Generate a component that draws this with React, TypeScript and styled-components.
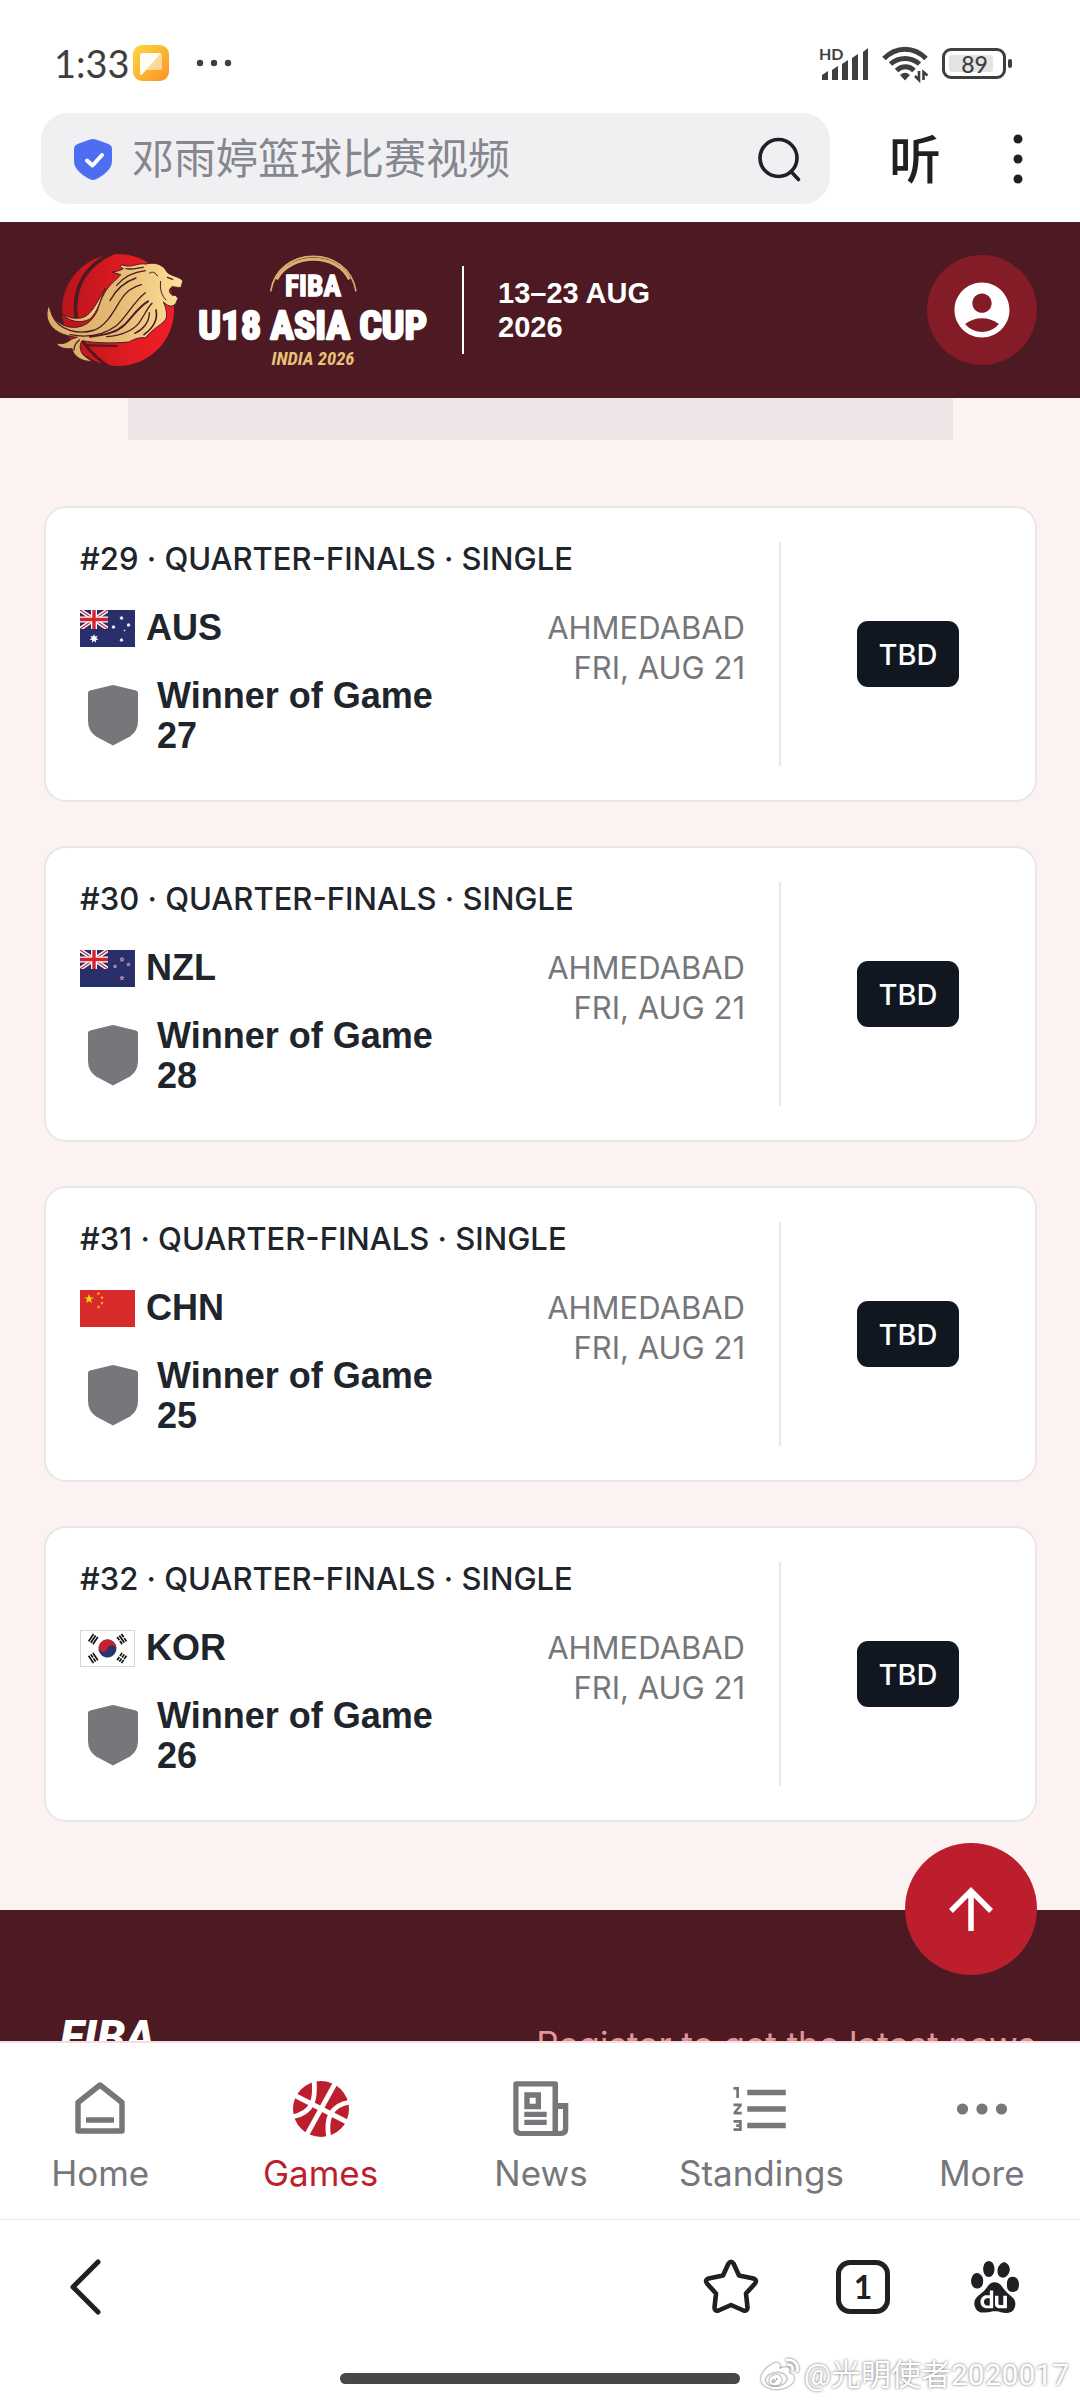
import React from 'react';
import styled, { createGlobalStyle, ThemeProvider } from 'styled-components';
import { MdAccountCircle, MdArrowUpward, MdFormatListNumbered } from 'react-icons/md';
import { SiBaidu } from 'react-icons/si';
import { FaWeibo } from 'react-icons/fa';

const theme = {
  colors: {
    $white: '#ffffff',
    $maroon: '#4d1923',
    $maroonLight: '#841c27',
    $red: '#bc1e2d',
    $pink: '#fbf2f1',
    $placeholder: '#ede4e5',
    $line: '#e8e8e8',
    $ink: '#20242b',
    $dark: '#101720',
    $gray: '#75777a',
    $system: '#3f3f3f',
    $browser: '#1f2024',
  },
};

type Team = 'AUS' | 'NZL' | 'CHN' | 'KOR';

interface IGame {
  id: number;
  team: Team;
  winnerOf: number;
}

interface INavProps {
  active?: boolean;
}

const GAMES: IGame[] = [
  { id: 29, team: 'AUS', winnerOf: 27 },
  { id: 30, team: 'NZL', winnerOf: 28 },
  { id: 31, team: 'CHN', winnerOf: 25 },
  { id: 32, team: 'KOR', winnerOf: 26 },
];

const GlobalStyle = createGlobalStyle`
  * {
    box-sizing: border-box;
  }

  body {
    margin: 0;
    font-family: 'Liberation Sans', 'Noto Sans CJK SC', sans-serif;
    background-color: #ffffff;
  }

  button {
    padding: 0;
    border: 0;
    background: none;
    color: inherit;
    font: inherit;
    cursor: pointer;
  }

  a {
    color: inherit;
    text-decoration: none;
  }

  svg {
    display: block;
    flex-shrink: 0;
    overflow: visible;
  }
`;

const Screen = styled.div`
  height: 100vh;
  display: flex;
  flex-direction: column;
`;

/* system status bar */

const StatusBar = styled.div`
  height: 113px;
  padding: 13px 74px 0 54px;
  display: flex;
  align-items: center;
  justify-content: space-between;
  flex-shrink: 0;
  color: ${({ theme }) => theme.colors.$system};
`;

const StatusGroup = styled.div<{ gap: number }>`
  display: flex;
  align-items: center;
  gap: ${({ gap }) => gap}px;
`;

const Clock = styled.time`
  font: 38px/46px Lato, sans-serif;
`;

const Battery = styled.div`
  width: 64px;
  height: 31px;
  padding: 4px;
  position: relative;
  border: 3px solid currentColor;
  border-radius: 9px;

  &::after {
    content: '';
    width: 4px;
    height: 9px;
    position: absolute;
    top: 8px;
    right: -9px;
    border-radius: 2px;
    background-color: currentColor;
  }
`;

const BatteryLevel = styled.div`
  width: 44px;
  height: 17px;
  padding-left: 7px;
  border-radius: 3px;
  background-color: #e4e4e4;
  font: 500 23px/18px Lato, sans-serif;
  text-align: center;
`;

/* browser toolbar */

const Toolbar = styled.div`
  padding: 0 50px 18px 41px;
  display: flex;
  align-items: center;
  flex-shrink: 0;
  color: ${({ theme }) => theme.colors.$browser};
`;

const SearchField = styled.form`
  height: 91px;
  padding: 0 26px 0 32px;
  display: flex;
  flex: 1;
  align-items: center;
  gap: 19px;
  border-radius: 27px;
  background-color: #f0f0f3;
`;

const SearchInput = styled.input`
  min-width: 0;
  padding: 0 0 6px;
  flex: 1;
  border: 0;
  outline: 0;
  background: none;
  font: 42px/60px 'Noto Sans CJK SC', sans-serif;

  &::placeholder {
    color: #858790;
    opacity: 1;
  }
`;

const ListenButton = styled.button`
  margin: 0 65px 4px 59px;
  font: 500 52px/60px 'Noto Sans CJK SC', sans-serif;
`;

/* site header */

const StyledHeader = styled.header`
  height: 176px;
  padding: 0 43px 0 44px;
  display: flex;
  align-items: center;
  flex-shrink: 0;
  background-color: ${({ theme }) => theme.colors.$maroon};
`;

const HeaderDates = styled.div`
  width: 240px;
  height: 88px;
  margin-left: 34px;
  padding-left: 34px;
  display: flex;
  align-items: center;
  border-left: 2px solid ${({ theme }) => theme.colors.$white};
  color: ${({ theme }) => theme.colors.$white};
  font-size: 29px;
  font-weight: 700;
  line-height: 34px;
`;

const AccountButton = styled.button`
  width: 110px;
  height: 110px;
  margin-left: auto;
  display: flex;
  align-items: center;
  justify-content: center;
  border-radius: 50%;
  background-color: ${({ theme }) => theme.colors.$maroonLight};
  color: ${({ theme }) => theme.colors.$white};
`;

/* scrolled page */

const Viewport = styled.div`
  min-height: 0;
  position: relative;
  flex: 1;
`;

const Scroller = styled.main`
  height: 100%;
  overflow: hidden;
  background-color: ${({ theme }) => theme.colors.$pink};
`;

const AdSlot = styled.div`
  height: 42px;
  margin: 0 127px 0 128px;
  background-color: ${({ theme }) => theme.colors.$placeholder};
`;

const GameList = styled.ul`
  margin: 0;
  padding: 66px 43px 88px 44px;
  display: flex;
  flex-direction: column;
  gap: 44px;
  list-style: none;
`;

const GameCard = styled.li`
  padding: 34px 0;
  display: flex;
  border: 2px solid ${({ theme }) => theme.colors.$line};
  border-radius: 22px;
  background-color: ${({ theme }) => theme.colors.$white};
`;

const GameInfo = styled.div`
  padding: 0 34px 10px;
  flex: 1;
`;

const GameTitle = styled.h2`
  margin: 0 0 32px;
  color: ${({ theme }) => theme.colors.$ink};
  font-family: Inter, sans-serif;
  font-size: 31px;
  font-weight: 500;
  line-height: 34px;
`;

const GameBody = styled.div`
  display: flex;
  justify-content: space-between;
`;

const Teams = styled.div`
  width: 360px;
  display: flex;
  flex-direction: column;
  gap: 28px;
  color: ${({ theme }) => theme.colors.$ink};
  font-size: 36px;
  font-weight: 700;
  line-height: 40px;
`;

const TeamRow = styled.div`
  display: flex;
  align-items: center;
  gap: 11px;
`;

const Venue = styled.div`
  color: ${({ theme }) => theme.colors.$gray};
  font-family: Inter, sans-serif;
  font-size: 31px;
  line-height: 40px;
  text-align: right;
`;

const GameStatus = styled.div`
  width: 256px;
  display: flex;
  align-items: center;
  justify-content: center;
  border-left: 2px solid ${({ theme }) => theme.colors.$line};
`;

const StatusButton = styled.button`
  width: 102px;
  height: 66px;
  border-radius: 11px;
  background-color: ${({ theme }) => theme.colors.$dark};
  color: ${({ theme }) => theme.colors.$white};
  font-family: Inter, sans-serif;
  font-size: 29px;
  font-weight: 500;
`;

const StyledFooter = styled.footer`
  padding: 110px 44px 60px 60px;
  display: flex;
  align-items: flex-start;
  justify-content: space-between;
  background-color: ${({ theme }) => theme.colors.$maroon};
`;

const FooterLogo = styled.a`
  color: ${({ theme }) => theme.colors.$white};
  font: italic 900 45px/34px Roboto, sans-serif;
`;

const FooterLink = styled.a`
  padding-top: 4px;
  color: #e2959b;
  font-family: Inter, sans-serif;
  font-size: 35px;
  line-height: 40px;
`;

const ScrollTopButton = styled.button`
  width: 132px;
  height: 132px;
  position: absolute;
  right: 43px;
  bottom: 66px;
  display: flex;
  align-items: center;
  justify-content: center;
  border-radius: 50%;
  background-color: ${({ theme }) => theme.colors.$red};
  color: ${({ theme }) => theme.colors.$white};
`;

/* site tab bar */

const BottomNav = styled.nav`
  height: 178px;
  padding: 33px 10px 0 12px;
  display: grid;
  grid-template-columns: repeat(5, 1fr);
  gap: 44px;
  align-items: start;
  flex-shrink: 0;
  border-top: 2px solid #f7dede;
`;

const NavLink = styled.a<INavProps>`
  display: flex;
  flex-direction: column;
  align-items: center;
  gap: 11px;
  color: ${({ theme, active }) => (active ? theme.colors.$red : theme.colors.$gray)};
  font-family: Inter, sans-serif;
  font-size: 35px;
  line-height: 40px;
`;

/* browser bottom bar */

const BrowserBar = styled.div`
  height: 181px;
  position: relative;
  display: flex;
  flex-direction: column;
  align-items: center;
  justify-content: space-between;
  flex-shrink: 0;
  border-top: 1px solid ${({ theme }) => theme.colors.$line};
  color: ${({ theme }) => theme.colors.$browser};
`;

const BrowserActions = styled.div`
  width: 100%;
  padding: 36px 54px 0 56px;
  display: flex;
  align-items: center;
  gap: 70px;
`;

const BarButton = styled.button<{ first?: boolean }>`
  width: 62px;
  height: 62px;
  margin-right: ${({ first }) => (first ? 'auto' : '0')};
  display: flex;
  align-items: center;
  justify-content: center;
`;

const TabCount = styled.span`
  width: 54px;
  height: 54px;
  border: 5px solid currentColor;
  border-radius: 14px;
  font: 700 32px/44px Lato, sans-serif;
`;

const HomeIndicator = styled.div`
  width: 37%;
  height: 11px;
  margin-bottom: 16px;
  border-radius: 6px;
  background-color: #474747;
`;

const Watermark = styled.div`
  position: absolute;
  right: 11px;
  bottom: 5px;
  display: flex;
  align-items: center;
  gap: 5px;
  color: ${({ theme }) => theme.colors.$white};
  font: 30px/40px Roboto, 'Noto Sans CJK SC', sans-serif;
  text-shadow: 0 0 3px rgba(0, 0, 0, 0.6);

  svg {
    filter: drop-shadow(0 0 1px rgba(0, 0, 0, 0.7));
  }
`;

const starPoints = (cx: number, cy: number, r: number, spikes = 5, inner = 0.4) =>
  Array.from({ length: spikes * 2 }, (_, i) => {
    const radius = i % 2 ? r * inner : r;
    const angle = (Math.PI * i) / spikes - Math.PI / 2;
    return `${(cx + radius * Math.cos(angle)).toFixed(2)},${(cy + radius * Math.sin(angle)).toFixed(2)}`;
  }).join(' ');

const UnionJack = () => (
  <>
    <rect width="55" height="37" fill="#282f6b" />
    <svg width="28" height="19" viewBox="0 0 28 19" style={{ overflow: 'hidden' }}>
      <path d="M0 0l28 19M28 0L0 19" stroke="#fff" strokeWidth="4" />
      <path d="M0 0l28 19M28 0L0 19" stroke="#d22f3a" strokeWidth="1.4" />
      <path d="M14 0v19M0 9.5h28" stroke="#fff" strokeWidth="6" />
      <path d="M14 0v19M0 9.5h28" stroke="#d9202c" strokeWidth="3.4" />
    </svg>
  </>
);

const Trigram = ({ x, y, angle, broken }: { x: number; y: number; angle: number; broken: number[] }) => (
  <g transform={`translate(${x} ${y}) rotate(${angle})`} stroke="#111" strokeWidth="1.7">
    {[-2.6, 0, 2.6].map((row, i) => (
      <path key={row} d={broken.includes(i) ? `M-4.4 ${row}h3.9M.5 ${row}h3.9` : `M-4.4 ${row}h8.8`} />
    ))}
  </g>
);

const FLAGS: Record<Team, React.ReactNode> = {
  AUS: (
    <>
      <UnionJack />
      <g fill="#fff">
        <polygon points={starPoints(14, 28.5, 4.6, 7, 0.5)} />
        <polygon points={starPoints(41.5, 8, 2.3, 7, 0.5)} />
        <polygon points={starPoints(33.5, 17, 2.3, 7, 0.5)} />
        <polygon points={starPoints(48.5, 15, 2.3, 7, 0.5)} />
        <polygon points={starPoints(41.5, 30, 2.3, 7, 0.5)} />
        <polygon points={starPoints(44.5, 20.5, 1.2)} />
      </g>
    </>
  ),
  NZL: (
    <>
      <UnionJack />
      <g fill="#d9202c" stroke="#e9e3ee" strokeWidth="0.5">
        <polygon points={starPoints(42, 9.5, 2.2)} />
        <polygon points={starPoints(35, 16.5, 1.8)} />
        <polygon points={starPoints(48.5, 14.5, 1.8)} />
        <polygon points={starPoints(42, 28, 2.2)} />
      </g>
    </>
  ),
  CHN: (
    <>
      <rect width="55" height="37" fill="#d92a2b" />
      <g fill="#fcd30d">
        <polygon points={starPoints(9, 9, 5)} />
        <polygon points={starPoints(18.5, 3.5, 1.9)} />
        <polygon points={starPoints(22, 7.5, 1.9)} />
        <polygon points={starPoints(22, 13, 1.9)} />
        <polygon points={starPoints(18.5, 17, 1.9)} />
      </g>
    </>
  ),
  KOR: (
    <>
      <rect x="0.5" y="0.5" width="54" height="36" fill="#fff" stroke="#d3d5d8" />
      <g transform="translate(27.5 18.5) rotate(15)">
        <circle r="9" fill="#27356f" />
        <path d="M-9 0a9 9 0 0 1 18 0a4.5 4.5 0 0 0-9 0a4.5 4.5 0 0 1-9 0z" fill="#c8202f" />
      </g>
      <Trigram x={13.2} y={9.2} angle={-56} broken={[]} />
      <Trigram x={41.8} y={9.2} angle={56} broken={[0, 2]} />
      <Trigram x={13.2} y={28} angle={56} broken={[1]} />
      <Trigram x={41.8} y={28} angle={-56} broken={[0, 1, 2]} />
    </>
  ),
};

const Flag = ({ team }: { team: Team }) => (
  <svg width="55" height="37" viewBox="0 0 55 37" aria-hidden="true">
    {FLAGS[team]}
  </svg>
);

const TeamShield = () => (
  <svg width="66" height="66" viewBox="0 0 66 66" fill="#75777a" aria-hidden="true">
    <path d="M33 2 56 7.4Q58 8 58 10V38Q58 48 50 53.5L33 62.5 16 53.5Q8 48 8 38V10Q8 8 10 7.4Z" />
  </svg>
);

const CupLogo = () => (
  <svg width="384" height="116" viewBox="132 96 1152 348" role="img" aria-label="FIBA U18 Asia Cup India 2026">
    <defs>
      <linearGradient id="ball">
        <stop offset="0" stopColor="#b8151b" />
        <stop offset="0.6" stopColor="#e01b22" />
        <stop offset="1" stopColor="#f01d26" />
      </linearGradient>
      <linearGradient id="gold">
        <stop offset="0" stopColor="#d9ae68" />
        <stop offset="0.5" stopColor="#e3b973" />
        <stop offset="1" stopColor="#ffe09a" />
      </linearGradient>
    </defs>
    <circle cx="354" cy="270" r="168" fill="url(#ball)" />
    <g fill="none" stroke="#4d1923" strokeLinecap="round">
      <path d="M344 96C262 132 218 196 228 290" strokeWidth="11" />
      <path d="M250 366C274 400 300 424 334 444" strokeWidth="9" />
      <path d="M262 376 350 378" strokeWidth="6" />
    </g>
    <path
      d="M148 255C150 290 178 318 214 322C252 324 276 306 292 272C302 240 312 214 336 190C346 180 356 172 362 164L336 156C350 154 360 152 370 146C362 142 358 140 366 134C392 146 410 128 438 132C462 126 484 132 496 148C500 158 506 162 520 167C534 172 546 176 548 184L544 200C538 206 534 200 528 202C516 196 510 204 508 212C510 224 518 228 528 226L534 236C528 244 530 254 518 257C508 262 498 252 490 246C498 262 502 280 498 296C488 314 464 320 436 354C420 350 402 358 386 366C340 370 290 370 246 362C236 378 240 398 256 410L276 424C246 426 220 408 216 386C196 388 176 384 168 368C184 374 196 370 208 362C216 356 224 354 232 352C188 348 158 332 146 306C138 288 140 268 148 255Z"
      fill="url(#gold)"
      stroke="#4d1923"
      strokeWidth="3"
      strokeLinejoin="round"
    />
    <path
      d="M186 280C206 296 236 300 258 288C284 270 296 236 316 204C300 236 296 276 268 298C240 312 204 304 186 280Z"
      fill="url(#gold)"
      stroke="#4d1923"
      strokeWidth="3"
    />
    <g fill="none" stroke="#4d1923" strokeWidth="4" strokeLinecap="round">
      <path d="M156 284C176 332 236 346 284 330C322 314 340 274 362 240C378 214 400 200 424 194" />
      <path d="M210 344C262 354 312 344 348 318C380 292 396 250 436 218" />
      <path d="M270 350C322 344 350 336 374 314C398 290 414 262 444 244" strokeWidth="6" />
      <path d="M320 350C362 346 396 334 416 310C434 286 440 266 456 250" />
      <path d="M404 340C428 330 448 308 448 278" />
      <path d="M432 344C462 322 474 298 468 270" strokeWidth="5" />
      <path d="M350 196C372 170 400 156 436 152" />
      <path d="M330 242C348 208 372 186 408 174" />
      <path d="M378 146C396 150 412 144 430 142" />
      <path d="M448 160C456 152 468 158 472 168" strokeWidth="3" />
      <path d="M482 184C478 208 486 228 498 240" strokeWidth="3" />
      <path d="M502 172L518 178" />
      <path d="M222 390C222 376 228 368 238 360" />
    </g>
    <g fill="none" stroke="#dbb070">
      <path d="M812 214C834 76 1044 72 1068 214" strokeWidth="5" />
      <path d="M830 178C870 98 1012 98 1048 178" strokeWidth="9" />
    </g>
    <g textAnchor="middle" fontFamily="'Roboto Condensed', sans-serif" fontWeight="700">
      <text x="939" y="228" fontSize="88" fill="#fff" stroke="#fff" strokeWidth="4">
        FIBA
      </text>
      <text x="938" y="358" fontSize="119" fill="#fff" stroke="#fff" strokeWidth="7" strokeLinejoin="round">
        U18 ASIA CUP
      </text>
      <text x="939" y="434" fontSize="56" fill="#e8c07a" fontStyle="italic">
        INDIA 2026
      </text>
    </g>
  </svg>
);

const HomeIcon = () => (
  <svg width="66" height="66" viewBox="0 0 66 66" fill="none" stroke="currentColor" strokeWidth="5.5">
    <path d="M11 55V26.5L33 9 55 26.5V55Z" strokeLinejoin="round" />
    <path d="M19 44h28" />
  </svg>
);

const BallIcon = () => (
  <svg width="66" height="66" viewBox="0 0 66 66">
    <circle cx="33" cy="33" r="28" fill="currentColor" />
    <g fill="none" stroke="#fff" strokeWidth="4.8">
      <path d="M5 18.5 63 48" />
      <path d="M49 4 17 62" />
      <path d="M26 3C28 24 25 37 4 41" />
      <path d="M62 26C43 29 37 42 41 63" />
    </g>
  </svg>
);

const NewsIcon = () => (
  <svg width="66" height="66" viewBox="0 0 66 66" fill="currentColor">
    <path
      fillRule="evenodd"
      d="M8 5.3H47.5Q50 5.3 50 8V27H60.3V53Q60.3 60 53 60H12Q5.3 60 5.3 53V8Q5.3 5.3 8 5.3ZM10.5 10.5V52Q10.5 55 13 55H44.5V10.5ZM50 33V55H52.5Q55 55 55 52V33ZM16.3 16.3H33V33.3H16.3ZM21.7 21.7V27.7H27.7V21.7ZM16.3 35.7H38.7V41H16.3ZM16.3 43.7H38.7V49H16.3Z"
    />
  </svg>
);

const MoreIcon = () => (
  <svg width="66" height="66" viewBox="0 0 66 66" fill="currentColor">
    <circle cx="13.5" cy="33" r="5.6" />
    <circle cx="33" cy="33" r="5.6" />
    <circle cx="52.5" cy="33" r="5.6" />
  </svg>
);

const NAV_ITEMS = [
  { title: 'Home', icon: <HomeIcon /> },
  { title: 'Games', icon: <BallIcon />, active: true },
  { title: 'News', icon: <NewsIcon /> },
  { title: 'Standings', icon: <MdFormatListNumbered size={66} /> },
  { title: 'More', icon: <MoreIcon /> },
];

const SystemStatus = () => (
  <StatusBar>
    <StatusGroup gap={3}>
      <Clock>1:33</Clock>
      <svg width="36" height="36" viewBox="0 0 36 36">
        <defs>
          <linearGradient id="app" x2="1" y2="1">
            <stop offset="0" stopColor="#fbd83f" />
            <stop offset="1" stopColor="#fb9324" />
          </linearGradient>
        </defs>
        <rect width="36" height="36" rx="9" fill="url(#app)" />
        <path d="M26 8h1.5Q29 8 29 10V23.5Q29 25 27.5 25H12Z" fill="#fff" opacity="0.5" />
        <path d="M9 8H28L8.5 30Q7 30 7 28.5V10Q7 8 9 8Z" fill="#fff" opacity="0.95" />
      </svg>
      <svg width="64" height="8" viewBox="-25 0 64 8" fill="currentColor">
        <circle cx="3" cy="4" r="3.2" />
        <circle cx="17" cy="4" r="3.2" />
        <circle cx="31" cy="4" r="3.2" />
      </svg>
    </StatusGroup>
    <StatusGroup gap={12}>
      <svg width="52" height="34" viewBox="-1 0 52 34" fill="currentColor">
        <text x="0" y="14" fontSize="16" fontWeight="700" fontFamily="Lato, sans-serif">
          HD
        </text>
        <path d="M3 29l6-4v9H3ZM13 24l6-4v14h-6ZM23 18l6-4v20h-6ZM33 12l6-4v26h-6ZM44 6l5-4v32h-5Z" />
      </svg>
      <svg width="48" height="36" viewBox="0 0 48 36" fill="none" stroke="currentColor" strokeWidth="5">
        <path d="M2 13.5C14 1 32 1 44 13.5" />
        <path d="M8.5 19C17 11.5 29 11.5 37.5 19" />
        <path d="M14.5 25.5C20 20.5 27 20.5 32 25.5" />
        <path d="M23 35.5l-5-5.5q5-4.5 10 0z" fill="currentColor" stroke="none" />
        <path d="M37 26v9l-4-4M41.5 35v-8l4 3.5" strokeWidth="2.6" />
      </svg>
      <Battery>
        <BatteryLevel>89</BatteryLevel>
      </Battery>
    </StatusGroup>
  </StatusBar>
);

const BrowserToolbar = () => (
  <Toolbar>
    <SearchField>
      <svg width="40" height="44" viewBox="0 0 40 44">
        <path
          d="M17 2.5Q20 1.5 23 2.5L35.5 7Q39 8.5 39 12V24C39 32 31 38 23.5 42Q20 44 16.5 42C9 38 1 32 1 24V12Q1 8.5 4.5 7Z"
          fill="#4e6ef2"
        />
        <path d="M14 23.5l5.5 5 9.5-10.5" fill="none" stroke="#fff" strokeWidth="4" strokeLinecap="round" strokeLinejoin="round" />
      </svg>
      <SearchInput type="search" aria-label="搜索" placeholder="邓雨婷篮球比赛视频" />
      <button type="button" aria-label="搜索">
        <svg width="48" height="48" viewBox="0 0 48 48" fill="none" stroke="currentColor" strokeWidth="3.6" strokeLinecap="round">
          <circle cx="22.5" cy="23" r="18.5" />
          <path d="M35 36.5l7.5 8" />
        </svg>
      </button>
    </SearchField>
    <ListenButton type="button">听</ListenButton>
    <button type="button" aria-label="菜单">
      <svg width="24" height="60" viewBox="0 0 24 60" fill="currentColor">
        <circle cx="12" cy="10" r="4.5" />
        <circle cx="12" cy="30" r="4.5" />
        <circle cx="12" cy="50" r="4.5" />
      </svg>
    </button>
  </Toolbar>
);

const Header = () => (
  <StyledHeader>
    <a href="#home">
      <CupLogo />
    </a>
    <HeaderDates>
      <span>
        13–23 AUG
        <br />
        2026
      </span>
    </HeaderDates>
    <AccountButton type="button" aria-label="Account">
      <MdAccountCircle size={66} />
    </AccountButton>
  </StyledHeader>
);

const Game = ({ id, team, winnerOf }: IGame) => (
  <GameCard>
    <GameInfo>
      <GameTitle>#{id} · QUARTER-FINALS · SINGLE</GameTitle>
      <GameBody>
        <Teams>
          <TeamRow>
            <Flag team={team} />
            <span>{team}</span>
          </TeamRow>
          <TeamRow>
            <TeamShield />
            <span>Winner of Game {winnerOf}</span>
          </TeamRow>
        </Teams>
        <Venue>
          <div>AHMEDABAD</div>
          <div>FRI, AUG 21</div>
        </Venue>
      </GameBody>
    </GameInfo>
    <GameStatus>
      <StatusButton type="button">TBD</StatusButton>
    </GameStatus>
  </GameCard>
);

const App = () => {
  return (
    <ThemeProvider theme={theme}>
      <GlobalStyle />
      <Screen>
        <SystemStatus />
        <BrowserToolbar />
        <Header />
        <Viewport>
          <Scroller>
            <AdSlot />
            <GameList>
              {GAMES.map((game) => (
                <Game key={game.id} {...game} />
              ))}
            </GameList>
            <StyledFooter>
              <FooterLogo href="#fiba">FIBA</FooterLogo>
              <FooterLink href="#register">Register to get the latest news</FooterLink>
            </StyledFooter>
          </Scroller>
          <ScrollTopButton type="button" aria-label="Back to top">
            <MdArrowUpward size={66} />
          </ScrollTopButton>
        </Viewport>
        <BottomNav>
          {NAV_ITEMS.map(({ title, icon, active }) => (
            <NavLink key={title} href={`#${title.toLowerCase()}`} active={active}>
              {icon}
              <span>{title}</span>
            </NavLink>
          ))}
        </BottomNav>
        <BrowserBar>
          <BrowserActions>
            <BarButton type="button" aria-label="返回" first>
              <svg width="62" height="62" viewBox="0 0 62 62" fill="none" stroke="currentColor" strokeWidth="5" strokeLinecap="round" strokeLinejoin="round">
                <path d="M42 6 17 31 42 56" />
              </svg>
            </BarButton>
            <BarButton type="button" aria-label="收藏">
              <svg width="62" height="62" viewBox="0 0 62 62" fill="none" stroke="currentColor" strokeWidth="4.6" strokeLinejoin="round">
                <path d="M28.5 7.5Q31 4 33.5 7.5L39 19.500 53.500 22.500Q57.500 24 55 27.500L46 37.500 47.5 51.5Q47.500 55.500 43.5 54.5L31 49 18.5 54.5Q14.5 55.5 14.5 51.5L16 37.5 7 27.5Q4.500 24 8.500 22.500L23 19.500Z" />
              </svg>
            </BarButton>
            <BarButton type="button" aria-label="标签页">
              <TabCount>1</TabCount>
            </BarButton>
            <BarButton type="button" aria-label="百度">
              <SiBaidu size={52} />
            </BarButton>
          </BrowserActions>
          <HomeIndicator />
          <Watermark>
            <FaWeibo size={38} />
            <span>@光明使者2020017</span>
          </Watermark>
        </BrowserBar>
      </Screen>
    </ThemeProvider>
  );
};

export default App;
